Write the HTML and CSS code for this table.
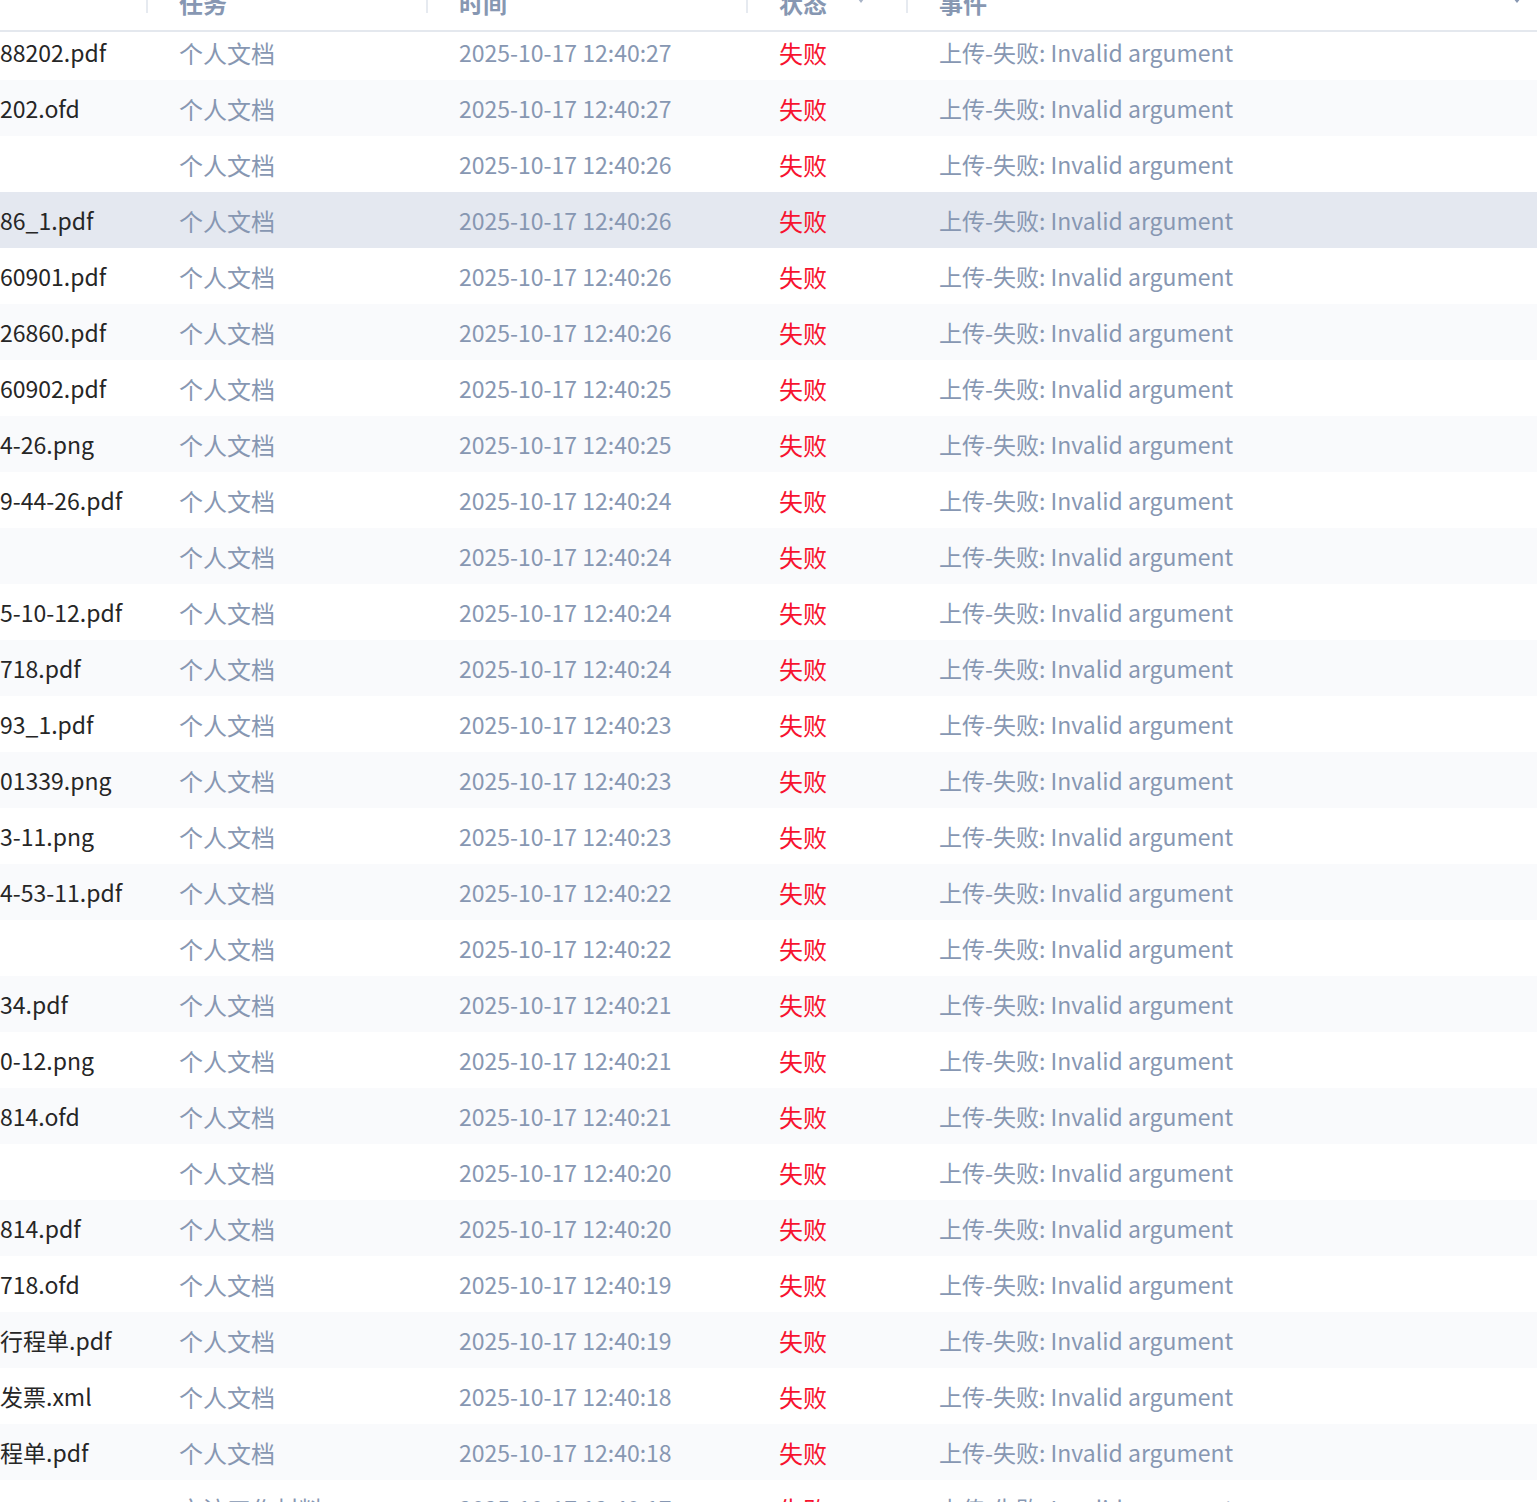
FILE: index.html
```
<!DOCTYPE html>
<html lang="zh-CN">
<head>
    <meta charset="UTF-8">
    <title>上传记录</title>
    <link rel="stylesheet" href="styles.css">
</head>
<body>
    <div class="log-table">
        <div class="log-head">
            <div class="cell"></div>
            <div class="cell"><span class="sep"></span>任务</div>
            <div class="cell"><span class="sep"></span>时间</div>
            <div class="cell"><span class="sep"></span>状态<span class="filter"></span></div>
            <div class="cell"><span class="sep"></span>事件<span class="more"></span></div>
        </div>
        <div class="log-body" id="logBody"></div>
    </div>
    <script src="app.js"></script>
</body>
</html>
```
FILE: styles.css
```
html, body {
    margin: 0;
    padding: 0;
    background-color: #ffffff;
    overflow: hidden;
    height: 100%;
}

body {
    font-family: "Noto Sans CJK SC", "Noto Sans", sans-serif;
    font-size: 23px;
}

.log-table {
    margin-top: -25px;
}

.log-head, .log-row {
    display: grid;
    grid-template-columns: 146px 280px 320px 160px 1fr;
}

.log-head {
    position: relative;
    z-index: 1;
    height: 55px;
    background-color: #ffffff;
    border-bottom: 2px solid #e4e8ee;
    color: #8797b2;
    font-weight: 700;
    font-size: 24px;
}

.log-head .cell {
    position: relative;
    display: flex;
    align-items: center;
    padding-left: 33px;
}

.sep {
    position: absolute;
    left: 0;
    top: 15px;
    width: 2px;
    height: 23px;
    background-color: #e6eaf0;
}

.filter {
    position: absolute;
    left: 112px;
    top: 24px;
    width: 0;
    height: 0;
    border-left: 3px solid transparent;
    border-right: 3px solid transparent;
    border-top: 4px solid #a8b4c7;
}

.more {
    position: absolute;
    right: 16px;
    top: 23px;
    width: 0;
    height: 0;
    border-left: 4px solid transparent;
    border-right: 4px solid transparent;
    border-top: 5px solid #8797b2;
}

.log-body {
    margin-top: -8px;
}

.log-row {
    height: 56px;
    align-items: center;
    color: #8797b2;
}

.log-row:nth-child(even) {
    background-color: #f9fafc;
}

.log-row.hover {
    background-color: #e4e8f0;
}

.log-row .cell {
    padding-left: 33px;
    white-space: nowrap;
    overflow: hidden;
}

.log-row .cell.name {
    padding-left: 0;
    color: #262626;
}

.log-row .cell.task {
    font-size: 24px;
}

.log-row .cell.status-fail {
    color: #f7132f;
    font-size: 24px;
}
```
FILE: app.js
```
const rows = [
    ['88202.pdf', '2025-10-17 12:40:27'],
    ['202.ofd', '2025-10-17 12:40:27'],
    ['', '2025-10-17 12:40:26'],
    ['86_1.pdf', '2025-10-17 12:40:26'],
    ['60901.pdf', '2025-10-17 12:40:26'],
    ['26860.pdf', '2025-10-17 12:40:26'],
    ['60902.pdf', '2025-10-17 12:40:25'],
    ['4-26.png', '2025-10-17 12:40:25'],
    ['9-44-26.pdf', '2025-10-17 12:40:24'],
    ['', '2025-10-17 12:40:24'],
    ['5-10-12.pdf', '2025-10-17 12:40:24'],
    ['718.pdf', '2025-10-17 12:40:24'],
    ['93_1.pdf', '2025-10-17 12:40:23'],
    ['01339.png', '2025-10-17 12:40:23'],
    ['3-11.png', '2025-10-17 12:40:23'],
    ['4-53-11.pdf', '2025-10-17 12:40:22'],
    ['', '2025-10-17 12:40:22'],
    ['34.pdf', '2025-10-17 12:40:21'],
    ['0-12.png', '2025-10-17 12:40:21'],
    ['814.ofd', '2025-10-17 12:40:21'],
    ['', '2025-10-17 12:40:20'],
    ['814.pdf', '2025-10-17 12:40:20'],
    ['718.ofd', '2025-10-17 12:40:19'],
    ['行程单.pdf', '2025-10-17 12:40:19'],
    ['发票.xml', '2025-10-17 12:40:18'],
    ['程单.pdf', '2025-10-17 12:40:18'],
    ['', '2025-10-17 12:40:17', '交流工作材料']
];

const body = document.getElementById('logBody');

rows.forEach((r, i) => {
    const row = document.createElement('div');
    row.className = 'log-row';
    // the hovered row in the capture
    if (i === 3) {
        row.classList.add('hover');
    }
    row.innerHTML =
        '<div class="cell name">' + r[0] + '</div>' +
        '<div class="cell task">' + (r[2] || '个人文档') + '</div>' +
        '<div class="cell">' + r[1] + '</div>' +
        '<div class="cell status-fail">失败</div>' +
        '<div class="cell">上传-失败: Invalid argument</div>';
    body.appendChild(row);
});
```
